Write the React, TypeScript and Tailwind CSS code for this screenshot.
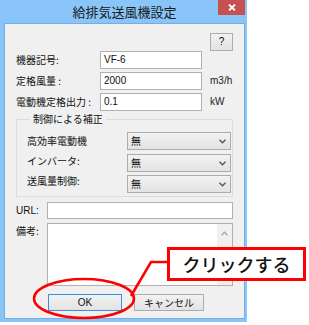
import React from "react";

const jp = { fontFamily: '"Noto Sans CJK JP", "Liberation Sans", sans-serif' };

function Chevron() {
  return (
    <svg width="7" height="5" viewBox="0 0 7 5" className="shrink-0">
      <path d="M0.5 0.8 L3.5 3.8 L6.5 0.8" fill="none" stroke="#555" strokeWidth="1.4" />
    </svg>
  );
}

function Select() {
  return (
    <div className="w-[104px] h-[18px] border border-[#acacac] bg-gradient-to-b from-[#f2f2f2] to-[#e3e3e3] flex items-center justify-between pl-[3px] pr-[4px]">
      <span className="text-[10px] leading-none text-[#111]">無</span>
      <Chevron />
    </div>
  );
}

function TextRow({ label, value, unit }: { label: string; value: string; unit?: string }) {
  return (
    <div className="flex items-center h-[18px]">
      <div className="w-[95px] pl-[11px] text-[10px] leading-none text-[#111] whitespace-nowrap">{label}</div>
      <div className="w-[102px] h-[18px] border border-[#b0b0b0] bg-white flex items-center pl-[3px]">
        <span className="text-[10px] leading-none text-[#111]" style={{ fontFamily: '"Liberation Sans", sans-serif' }}>{value}</span>
      </div>
      {unit && <div className="ml-[8px] text-[10px] leading-none text-[#222]" style={{ fontFamily: '"Liberation Sans", sans-serif' }}>{unit}</div>}
    </div>
  );
}

export default function App() {
  return (
    <div className="relative w-[309px] h-[325px] bg-white overflow-hidden" style={jp}>
      <div className="w-[247px] h-[322px] bg-[#89c5f8] flex flex-col">
        <div className="relative h-[23px] flex items-center justify-center">
          <span className="text-[13px] leading-none text-[#1a1a1a] pl-[2px]">給排気送風機設定</span>
          <div className="absolute right-[2px] top-0 w-[27px] h-[15px] bg-[#c75050] flex items-center justify-center">
            <svg width="8" height="7" viewBox="0 0 8 7">
              <path d="M1 0.5 L7 6.5 M7 0.5 L1 6.5" stroke="#fff" strokeWidth="1.8" />
            </svg>
          </div>
        </div>
        <div className="ml-[4px] mr-[2px] h-[296px] border border-[#74aee2] bg-[#f0f0f0] flex flex-col">
          <div className="flex justify-end pr-[11px] pt-[9px]">
            <div className="w-[23px] h-[18px] border border-[#acacac] bg-gradient-to-b from-[#f2f2f2] to-[#e3e3e3] flex items-center justify-center text-[10px] leading-none text-[#111]" style={{ fontFamily: '"Liberation Sans", sans-serif' }}>?</div>
          </div>
          <div className="flex flex-col gap-[3px]">
            <TextRow label="機器記号:" value="VF-6" />
            <TextRow label="定格風量 :" value="2000" unit="m3/h" />
            <TextRow label="電動機定格出力 :" value="0.1" unit="kW" />
          </div>
          <fieldset className="ml-[11px] w-[217px] mt-[1px] border border-[#dcdcdc] pl-[10px] pr-[1px] pb-[3px] pt-[6px]">
            <legend className="ml-[3px] px-[3px] text-[10px] leading-[14px] text-[#111]">制御による補正</legend>
            <div className="flex items-center h-[18px]">
              <div className="w-[100px] text-[10px] leading-none text-[#111]">高効率電動機</div>
              <Select />
            </div>
            <div className="flex items-center h-[18px] mt-[4px]">
              <div className="w-[100px] text-[10px] leading-none text-[#111] -mt-[4px]">インバータ:</div>
              <Select />
            </div>
            <div className="flex items-center h-[18px] mt-[3px]">
              <div className="w-[100px] text-[10px] leading-none text-[#111] -mt-[6px]">送風量制御:</div>
              <Select />
            </div>
          </fieldset>
          <div className="flex items-center h-[17px] mt-[5px]">
            <div className="w-[42px] pl-[11px] text-[10px] leading-none text-[#111]" style={{ fontFamily: '"Liberation Sans", sans-serif' }}>URL:</div>
            <div className="w-[186px] h-[17px] border border-[#b0b0b0] bg-white" />
          </div>
          <div className="flex items-start mt-[4px]">
            <div className="w-[42px] pl-[11px] pt-[3px] text-[10px] leading-none text-[#111]">備考:</div>
            <div className="w-[186px] h-[63px] border border-[#b0b0b0] bg-white flex justify-end">
              <div className="w-[15px] h-full bg-[#f0f0f0] flex justify-center pt-[7px]">
                <svg width="7" height="5" viewBox="0 0 7 5">
                  <path d="M0.5 4.2 L3.5 1.2 L6.5 4.2" fill="none" stroke="#a8a8a8" strokeWidth="1.3" />
                </svg>
              </div>
            </div>
          </div>
          <div className="flex mt-[8px] pl-[43px] gap-[12px]">
            <div className="w-[74px] h-[17px] border border-[#3c8fe0] bg-gradient-to-b from-[#f2f2f2] to-[#e3e3e3] flex items-center justify-center text-[10px] leading-none text-[#111]" style={{ fontFamily: '"Liberation Sans", sans-serif' }}>OK</div>
            <div className="w-[70px] h-[17px] border border-[#acacac] bg-gradient-to-b from-[#f2f2f2] to-[#e3e3e3] flex items-center justify-center text-[10px] leading-none text-[#111]">キャンセル</div>
          </div>
        </div>
      </div>

      <svg className="absolute left-0 top-0" width="309" height="325" viewBox="0 0 309 325">
        <ellipse cx="84" cy="298.5" rx="50" ry="19.5" fill="none" stroke="#ff0000" strokeWidth="2.5" />
        <polyline points="131,296 151,262 168,262" fill="none" stroke="#ff0000" strokeWidth="2.5" />
      </svg>
      <div className="absolute left-[167px] top-[247px] w-[139px] h-[34px] border-[3px] border-[#ff0000] bg-white flex items-center justify-center">
        <span className="text-[18px] leading-none font-medium text-[#111]">クリックする</span>
      </div>
    </div>
  );
}
